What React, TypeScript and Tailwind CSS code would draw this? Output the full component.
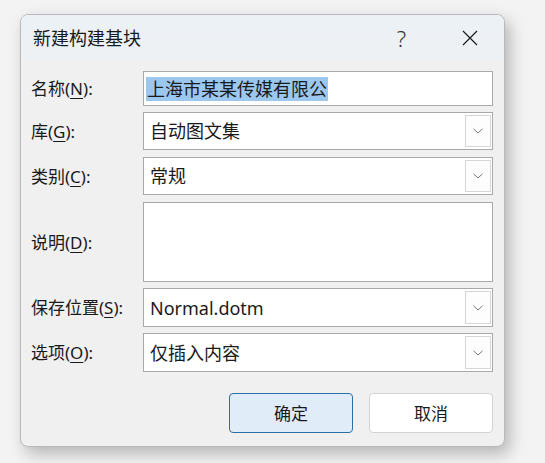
const font = {
  fontFamily: '"Noto Sans", "Noto Sans CJK SC", sans-serif',
};

function Chevron() {
  return (
    <svg width="10" height="6" viewBox="0 0 10 6" fill="none">
      <path d="M0.5 0.8 L5 5 L9.5 0.8" stroke="#666" strokeWidth="0.9" />
    </svg>
  );
}

function Label({ text, k }: { text: string; k: string }) {
  return (
    <div className="flex items-center text-[17px] text-[#1a1a1a] leading-none">
      {text}(<span className="underline underline-offset-[3px] decoration-1">{k}</span>):
    </div>
  );
}

function Select({ value, h }: { value: string; h: string }) {
  return (
    <div className={`flex items-center justify-between bg-white border border-[#a9a9a9] ${h}`}>
      <span className="pl-[6px] text-[18px] text-[#1a1a1a] leading-none">{value}</span>
      <div className="mr-[1px] flex h-[calc(100%-4px)] w-[26px] items-center justify-center border border-[#d6d6d6] bg-[#fdfdfd]">
        <Chevron />
      </div>
    </div>
  );
}

export default function App() {
  return (
    <div className="min-h-[463px] w-[545px] bg-[#f3f3f3] pl-[20px] pt-[14px]" style={font}>
      <div className="flex h-[433px] w-[485px] flex-col overflow-hidden rounded-[8px] border border-[#b9b9b9] bg-[#f0f0f0] shadow-[5px_7px_16px_rgba(0,0,0,0.25)]">
        {/* title */}
        <div className="flex h-[45px] items-center bg-gradient-to-b from-[#ebf1f6] to-[#eff1f3] pl-[12px]">
          <span className="text-[18px] text-[#1a1a1a] leading-none">新建构建基块</span>
          <span className="ml-auto mr-[56px] text-[22px] font-light text-[#333] leading-none">?</span>
          <svg width="16" height="16" viewBox="0 0 16 16" className="mr-[26px]">
            <path d="M1 1 L15 15 M15 1 L1 15" stroke="#1a1a1a" strokeWidth="1.2" />
          </svg>
        </div>

        {/* form */}
        <div className="mt-[11px] grid grid-cols-[112px_350px] pl-[10px]">
          <Label text="名称" k="N" />
          <div className="flex h-[35px] items-center border border-[#a9a9a9] bg-white pl-[2px]">
            <span className="bg-[#9cc7ee] px-[1px] py-[3px] text-[18px] text-[#1a1a1a] leading-none">
              上海市某某传媒有限公
            </span>
          </div>

          <div className="col-span-2 h-[6px]" />
          <Label text="库" k="G" />
          <Select value="自动图文集" h="h-[38px]" />

          <div className="col-span-2 h-[7px]" />
          <Label text="类别" k="C" />
          <Select value="常规" h="h-[38px]" />

          <div className="col-span-2 h-[7px]" />
          <Label text="说明" k="D" />
          <div className="h-[80px] border border-[#a9a9a9] bg-white" />

          <div className="col-span-2 h-[6px]" />
          <Label text="保存位置" k="S" />
          <Select value="Normal.dotm" h="h-[39px]" />

          <div className="col-span-2 h-[6px]" />
          <Label text="选项" k="O" />
          <Select value="仅插入内容" h="h-[39px]" />
        </div>

        {/* buttons */}
        <div className="mt-[21px] flex justify-end gap-[16px] pr-[11px]">
          <button className="flex h-[40px] w-[124px] items-center justify-center rounded-[4px] border border-[#2c6fa3] bg-[#e0edf8] text-[17px] text-[#1a1a1a] leading-none">
            确定
          </button>
          <button className="flex h-[40px] w-[124px] items-center justify-center rounded-[4px] border border-[#d3d3d3] bg-white text-[17px] text-[#1a1a1a] leading-none">
            取消
          </button>
        </div>
      </div>
    </div>
  );
}
